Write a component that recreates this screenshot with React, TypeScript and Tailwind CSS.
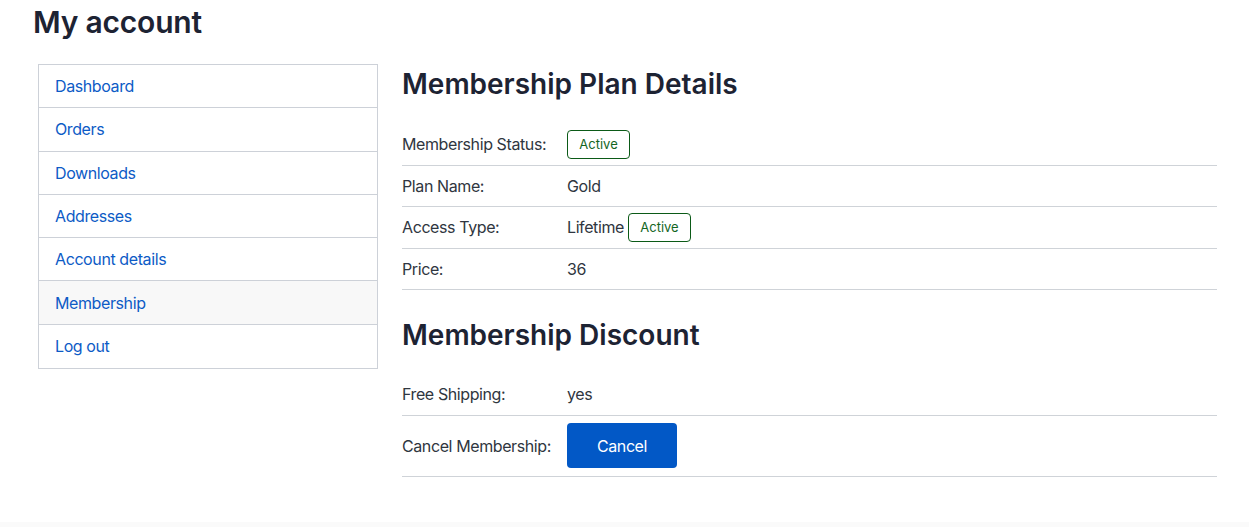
import React from "react";

const menu = ["Dashboard", "Orders", "Downloads", "Addresses", "Account details", "Membership", "Log out"];

function Badge() {
  return (
    <span className="inline-flex items-center justify-center w-[63px] h-[29px] border border-[#0b5a17] rounded-[4px] text-[13px] tracking-normal text-[#13661f]">
      Active
    </span>
  );
}

function Row({ label, children, tall }: { label: string; children: React.ReactNode; tall?: boolean }) {
  return (
    <div className={`flex items-center border-b border-[#cfd3d8] ${tall ? "h-[61px]" : "h-[41.5px]"}`}>
      <div className="w-[165px] shrink-0">{label}</div>
      <div className="flex items-center gap-[4px]">{children}</div>
    </div>
  );
}

export default function App() {
  return (
    <div className="min-h-[527px] bg-white font-['Inter',sans-serif] text-[16px] tracking-[-0.4px] text-[#2f3640] flex flex-col">
      <div className="flex-1">
        <h1 className="pl-[33px] pt-[4px] text-[30px] leading-[36px] font-semibold text-[#1d2333] tracking-[-0.2px]">
          My account
        </h1>

        <div className="flex gap-[24px] pl-[38px] pr-[32px] mt-[24px]">
          {/* sidebar */}
          <ul className="w-[340px] shrink-0 border border-[#cdd1d8] self-start">
            {menu.map((m) => (
              <li
                key={m}
                className={`h-[43.3px] flex items-center pl-[16px] border-b border-[#cdd1d8] last:border-b-0 text-[#0d5bc6] ${
                  m === "Membership" ? "bg-[#f8f8f8]" : ""
                }`}
              >
                {m}
              </li>
            ))}
          </ul>

          {/* content */}
          <div className="flex-1">
            <h2 className="text-[28px] leading-[40px] font-semibold text-[#1d2333] mb-[20px] tracking-normal">
              Membership Plan Details
            </h2>
            <Row label="Membership Status:">
              <Badge />
            </Row>
            <Row label="Plan Name:">Gold</Row>
            <Row label="Access Type:">
              Lifetime <Badge />
            </Row>
            <Row label="Price:">36</Row>

            <h2 className="text-[28px] leading-[40px] font-semibold text-[#1d2333] mt-[25px] mb-[19px] tracking-normal">
              Membership Discount
            </h2>
            <Row label="Free Shipping:">yes</Row>
            <Row label="Cancel Membership:" tall>
              <button className="w-[110px] h-[45px] bg-[#0258c6] text-white rounded-[4px] text-[16px]">Cancel</button>
            </Row>
          </div>
        </div>
      </div>
      <div className="h-[5px] bg-[#fafafa]" />
    </div>
  );
}
